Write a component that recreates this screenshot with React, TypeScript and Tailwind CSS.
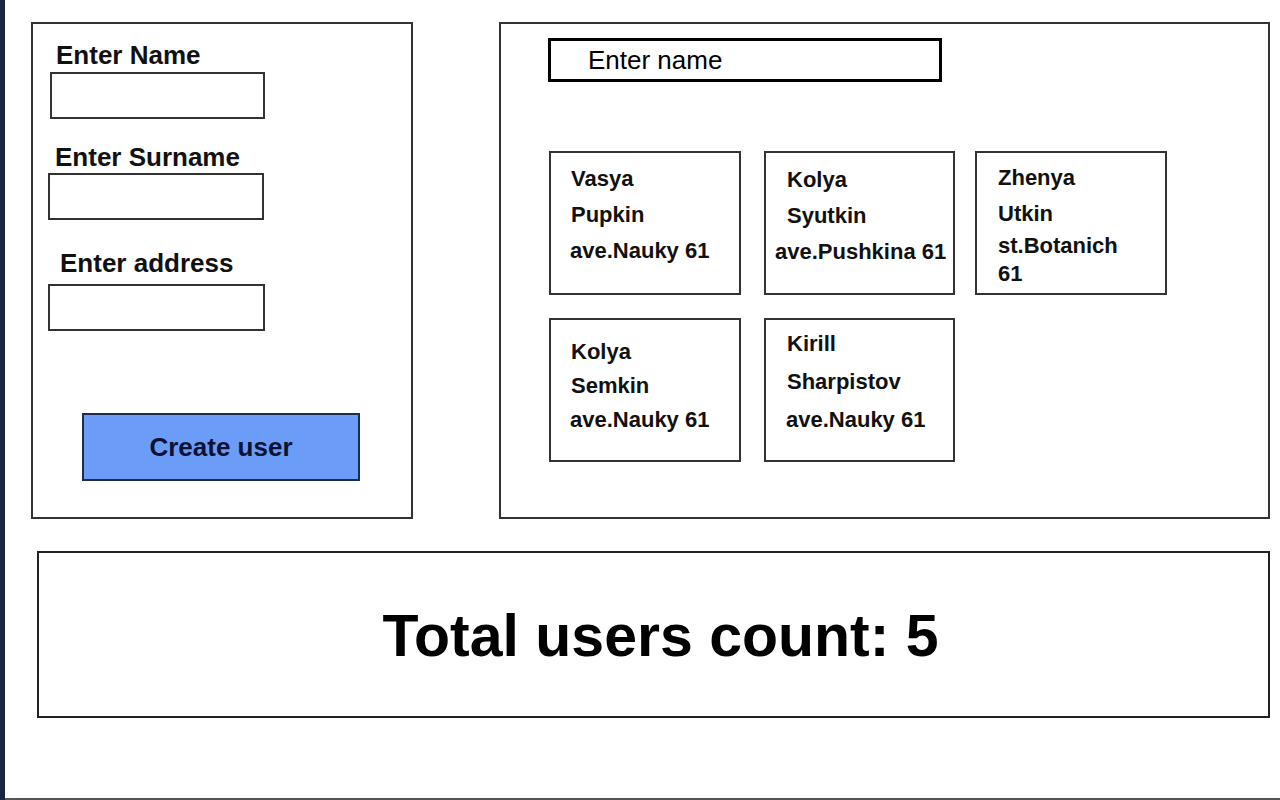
import React from 'react';

interface User {
  name: string;
  surname: string;
  address: string;
  pad: string; // top padding, the mockup is hand placed
  x: string;
  w: string;
}

const users: User[] = [
  { name: 'Vasya', surname: 'Pupkin', address: 'ave.Nauky 61', pad: 'pt-[8px]', x: 'pl-[20px]', w: 'w-[192px]' },
  { name: 'Kolya', surname: 'Syutkin', address: 'ave.Pushkina 61', pad: 'pt-[9px]', x: 'pl-[21px]', w: 'w-[191px]' },
  { name: 'Zhenya', surname: 'Utkin', address: 'st.Botanich 61', pad: 'pt-[7px]', x: 'pl-[21px]', w: 'w-[192px]' },
  { name: 'Kolya', surname: 'Semkin', address: 'ave.Nauky 61', pad: 'pt-[14px]', x: 'pl-[20px]', w: 'w-[192px]' },
  { name: 'Kirill', surname: 'Sharpistov', address: 'ave.Nauky 61', pad: 'pt-[6px]', x: 'pl-[21px]', w: 'w-[191px]' },
];

const UserCard: React.FC<{ user: User; index: number }> = ({ user, index }) => (
  <div className={`h-[144px] ${user.w} border-2 border-[#333] ${user.pad} ${user.x} text-[22px] font-bold text-[#111]`}>
    <div className="leading-[36px]">{user.name}</div>
    <div className={index === 3 ? 'leading-[32px]' : index === 4 ? 'leading-[40px]' : 'leading-[36px]'}>{user.surname}</div>
    {index === 1 ? (
      <div className="leading-[36px] -ml-[12px] whitespace-nowrap">{user.address}</div>
    ) : index === 2 ? (
      <div className="leading-[28px] w-[130px]">{user.address}</div>
    ) : (
      <div className="leading-[36px] -ml-[1px] whitespace-nowrap">{user.address}</div>
    )}
  </div>
);

const App: React.FC = () => {
  return (
    <div className="flex h-[800px] w-[1280px] overflow-hidden bg-white font-['Liberation_Sans',Arial,sans-serif] text-[#111]">
      <div className="w-[5px] shrink-0 bg-[#1b2440]" />
      <div className="flex flex-1 flex-col">
        <div className="flex pl-[26px] pt-[22px]">
          {/* create user form */}
          <div className="h-[497px] w-[382px] border-2 border-[#333]">
            <div className="ml-[23px] mt-[16px] text-[26px] font-bold leading-[30px]">Enter Name</div>
            <div className="ml-[17px] mt-[2px] h-[47px] w-[215px] border-2 border-[#333]" />
            <div className="ml-[22px] mt-[23px] text-[26px] font-bold leading-[30px]">Enter Surname</div>
            <div className="ml-[15px] mt-[1px] h-[47px] w-[216px] border-2 border-[#333]" />
            <div className="ml-[27px] mt-[28px] text-[26px] font-bold leading-[30px]">Enter address</div>
            <div className="ml-[15px] mt-[6px] h-[47px] w-[217px] border-2 border-[#333]" />
            <button className="ml-[49px] mt-[82px] flex h-[68px] w-[278px] items-center justify-center border-2 border-[#1d2b4d] bg-[#6b9cf8] text-[26px] font-bold text-[#0b1233]">
              Create user
            </button>
          </div>

          {/* users list */}
          <div className="ml-[86px] h-[497px] w-[771px] border-2 border-[#333]">
            <div className="ml-[47px] mt-[14px] flex h-[44px] w-[394px] items-center border-[3px] border-black pl-[37px] text-[26px] leading-none text-black">
              Enter name
            </div>
            <div className="ml-[48px] mt-[69px] grid grid-cols-[215px_211px_192px] gap-y-[23px]">
              {users.map((u, i) => (
                <UserCard key={i} user={u} index={i} />
              ))}
            </div>
          </div>
        </div>

        <div className="ml-[32px] mt-[32px] flex h-[167px] w-[1233px] items-center justify-center border-2 border-[#222] pl-[14px] pt-[4px]">
          <span className="text-[59px] font-bold leading-none text-black">Total users count: {users.length}</span>
        </div>

        <div className="mt-auto h-[2px] bg-[#555]" />
      </div>
    </div>
  );
};

export default App;
